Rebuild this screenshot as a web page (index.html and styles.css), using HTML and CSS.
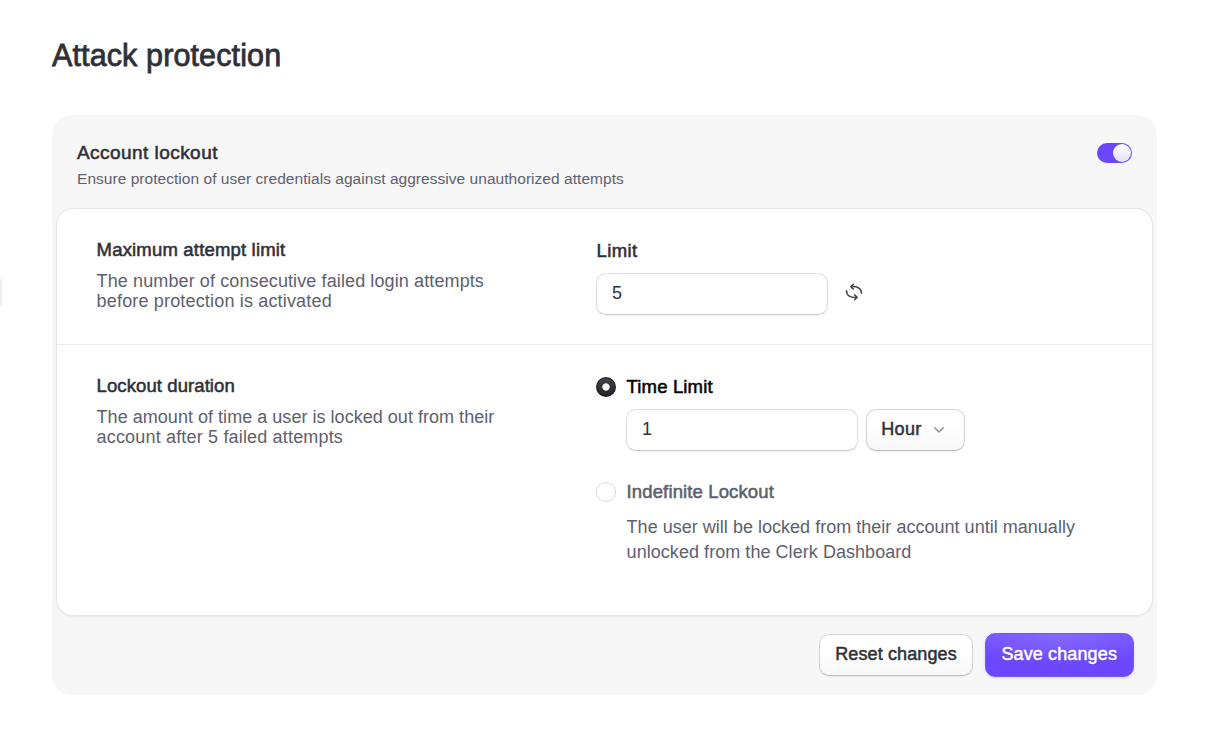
FILE: index.html
```html
<!DOCTYPE html>
<html lang="en">
<head>
<meta charset="utf-8">
<title>Attack protection</title>
<link rel="stylesheet" href="styles.css">
</head>
<body>
<div class="edge-handle"></div>
<main class="page">
  <h1 class="page-title"><span class="t-title">Attack protection</span></h1>
  <section class="panel">
    <header class="panel-header">
      <div>
        <h2 class="panel-title"><span class="t-panel">Account lockout</span></h2>
        <p class="panel-text">Ensure protection of user credentials against aggressive unauthorized attempts</p>
      </div>
      <button class="switch" role="switch" aria-checked="true" aria-label="Account lockout"><span class="switch-thumb"></span></button>
    </header>
    <div class="card">
      <div class="row row-limit">
        <div class="row-info">
          <h3 class="label t-max">Maximum attempt limit</h3>
          <p class="description"><span class="t-d1">The number of consecutive failed login attempts</span><br><span class="t-d2">before protection is activated</span></p>
        </div>
        <div class="row-control">
          <div class="label limit-label t-limit">Limit</div>
          <div class="field-line">
            <div class="input">5</div>
            <svg class="reset-icon" width="18" height="18" viewBox="0 0 18 18" fill="none" stroke="#42434d" stroke-width="1.5" stroke-linecap="round" stroke-linejoin="round"><path d="M8.300 1.300 5.800 3.700l2.600 2.400M6.200 3.700C12.200 3.100 16.500 5.400 16.500 10.300M9.700 16.700l2.500-2.400-2.600-2.400M11.800 14.300C5.800 14.900 1.500 12.600 1.500 7.700"/></svg>
          </div>
        </div>
      </div>
      <div class="row row-duration">
        <div class="row-info">
          <h3 class="label t-dur">Lockout duration</h3>
          <p class="description"><span class="t-d3">The amount of time a user is locked out from their</span><br><span class="t-d4">account after 5 failed attempts</span></p>
        </div>
        <div class="row-control">
          <div class="option">
            <span class="radio radio-on"></span>
            <span class="label label-on t-time">Time Limit</span>
          </div>
          <div class="field-line option-fields">
            <div class="input">1</div>
            <button class="button select"><span class="t-hour">Hour</span><svg width="12" height="8" viewBox="0 0 12 8" fill="none" stroke="#8e8f9c" stroke-width="1.5" stroke-linecap="round" stroke-linejoin="round"><path d="M1.700 1.800 6 6l4.300-4.200"/></svg></button>
          </div>
          <div class="option option-indefinite">
            <span class="radio"></span>
            <span class="label label-off t-ind">Indefinite Lockout</span>
          </div>
          <p class="option-text"><span class="t-o1">The user will be locked from their account until manually</span><br><span class="t-o2">unlocked from the Clerk Dashboard</span></p>
        </div>
      </div>
    </div>
    <footer class="panel-footer">
      <button class="button reset"><span class="t-reset">Reset changes</span></button>
      <button class="button save"><span class="t-save">Save changes</span></button>
    </footer>
  </section>
</main>
</body>
</html>
```
FILE: styles.css
```css
* { box-sizing: border-box; }
body { margin: 0; height: 732px; overflow: hidden; background: #fff; color: #2f3037; font: 18px/20px "Liberation Sans", Arial, sans-serif; }
h1, h2, h3, p { margin: 0; font-weight: 400; }
button { font: inherit; color: inherit; }
.edge-handle { position: absolute; left: -8px; top: 277px; width: 10px; height: 31px; border-radius: 5px; background: #efeff0; }
.page { padding: 35px 70px 0 52px; }
.page-title { height: 80px; font-size: 30.500px; line-height: 40px; letter-spacing: .12px; -webkit-text-stroke: .8px currentColor; }
.panel { height: 580px; padding: 0 5px; border-radius: 20px; background: #f7f7f7; }
.panel-header { display: flex; justify-content: space-between; height: 94px; padding: 26px 20px 0; }
.panel-title { font-size: 19px; line-height: 23px; letter-spacing: .45px; -webkit-text-stroke: .55px currentColor; }
.panel-text { margin-top: 5px; font-size: 15.500px; line-height: 20px; letter-spacing: .04px; color: #5e5f6e; white-space: nowrap; }
.switch { width: 35px; height: 20px; margin-top: 2px; padding: 1px; border: 0; border-radius: 10px; background: #6c47ff; display: flex; justify-content: flex-end; }
.switch-thumb { width: 18px; height: 18px; border-radius: 50%; background: linear-gradient(#fff, #e4e1f6); }
.card { height: 406px; border-radius: 16px; background: #fff; box-shadow: 0 0 0 1px #e6e6e7, 0 1px 2px 1px #0000000d; }
.row { display: flex; padding: 0 39.600px; white-space: nowrap; }
.row-limit { height: 136px; padding-top: 31px; border-bottom: 1px solid #ededef; }
.row-duration { padding-top: 31px; }
.row-info { width: 500px; }
.label { font-size: 18.500px; line-height: 20px; -webkit-text-stroke: .55px currentColor; }
.label-on { color: #050506; }
.label-off { color: #5e5f6e; }
.limit-label { margin-top: 1px; }
.description { margin-top: 11px; color: #5e5f6e; }
.field-line { display: flex; align-items: center; gap: 8px; margin: 12px 0 0 -.6px; }
.input { width: 232px; height: 42px; padding: 0 15px; border: 1px solid #dedee0; border-bottom-color: #c9c9cc; border-radius: 10px; line-height: 38px; box-shadow: 0 1px 2px #0000000d; }
.reset-icon { margin: -4px 0 0 9px; }
.option { display: flex; align-items: center; height: 22px; gap: 11px; }
.radio { width: 20px; height: 20px; margin-left: -1px; border: 1px solid #d9d9de; border-radius: 50%; }
.label-on, .label-off { margin-top: -1px; }
.radio-on { border: 0; background: radial-gradient(circle, #fff 3.300px, transparent 4px), linear-gradient(#44454d, #222329); box-shadow: inset 0 0 0 1px #17181c; }
.option-fields { margin: 11px 0 0 29.400px; }
.option-indefinite { margin-top: 30px; }
.option-text { margin: 12px 0 0 30px; line-height: 25px; color: #5e5f6e; }
.button { height: 42px; padding: 0; border: 1px solid #d4d4d6; border-bottom-color: #bdbdc0; border-radius: 10px; background: linear-gradient(#fff 40%, #f8f8f9); box-shadow: 0 1px 2px #0000000f; -webkit-text-stroke: .5px currentColor; }
.select { display: flex; align-items: center; justify-content: center; gap: 11px; width: 99px; padding-right: 5px; }
.select span { margin-top: -2px; }
.select svg { -webkit-text-stroke: 0; }
.panel-footer { display: flex; justify-content: flex-end; gap: 12px; padding: 18px 18.500px 0; }
.reset { width: 154px; line-height: 38px; margin-top: 1px; }
.reset span, .save span { position: relative; top: -1px; }
.save { width: 148.500px; height: 44px; border: 1px solid #7857fa; line-height: 40px; color: #fff; background: radial-gradient(ellipse 65% 75% at 50% 0, #8467ff, transparent), linear-gradient(#7653ff, #6c47ff 60%); box-shadow: 0 1px 3px #6c47ff30; text-shadow: 0 1px 1px #2d178060; }
.t-max { letter-spacing: .18px; }
.t-limit { letter-spacing: .35px; }
.t-dur { letter-spacing: .09px; }
.t-time { letter-spacing: .15px; }
.t-ind { letter-spacing: .13px; }
.t-d1 { letter-spacing: .11px; }
.t-d2, .t-d4 { letter-spacing: .17px; }
.t-d3 { letter-spacing: .03px; }
.t-o1 { letter-spacing: .02px; }
.t-o2 { letter-spacing: .05px; }
.t-hour { letter-spacing: .35px; }
.t-reset, .t-save { letter-spacing: .12px; }
```
